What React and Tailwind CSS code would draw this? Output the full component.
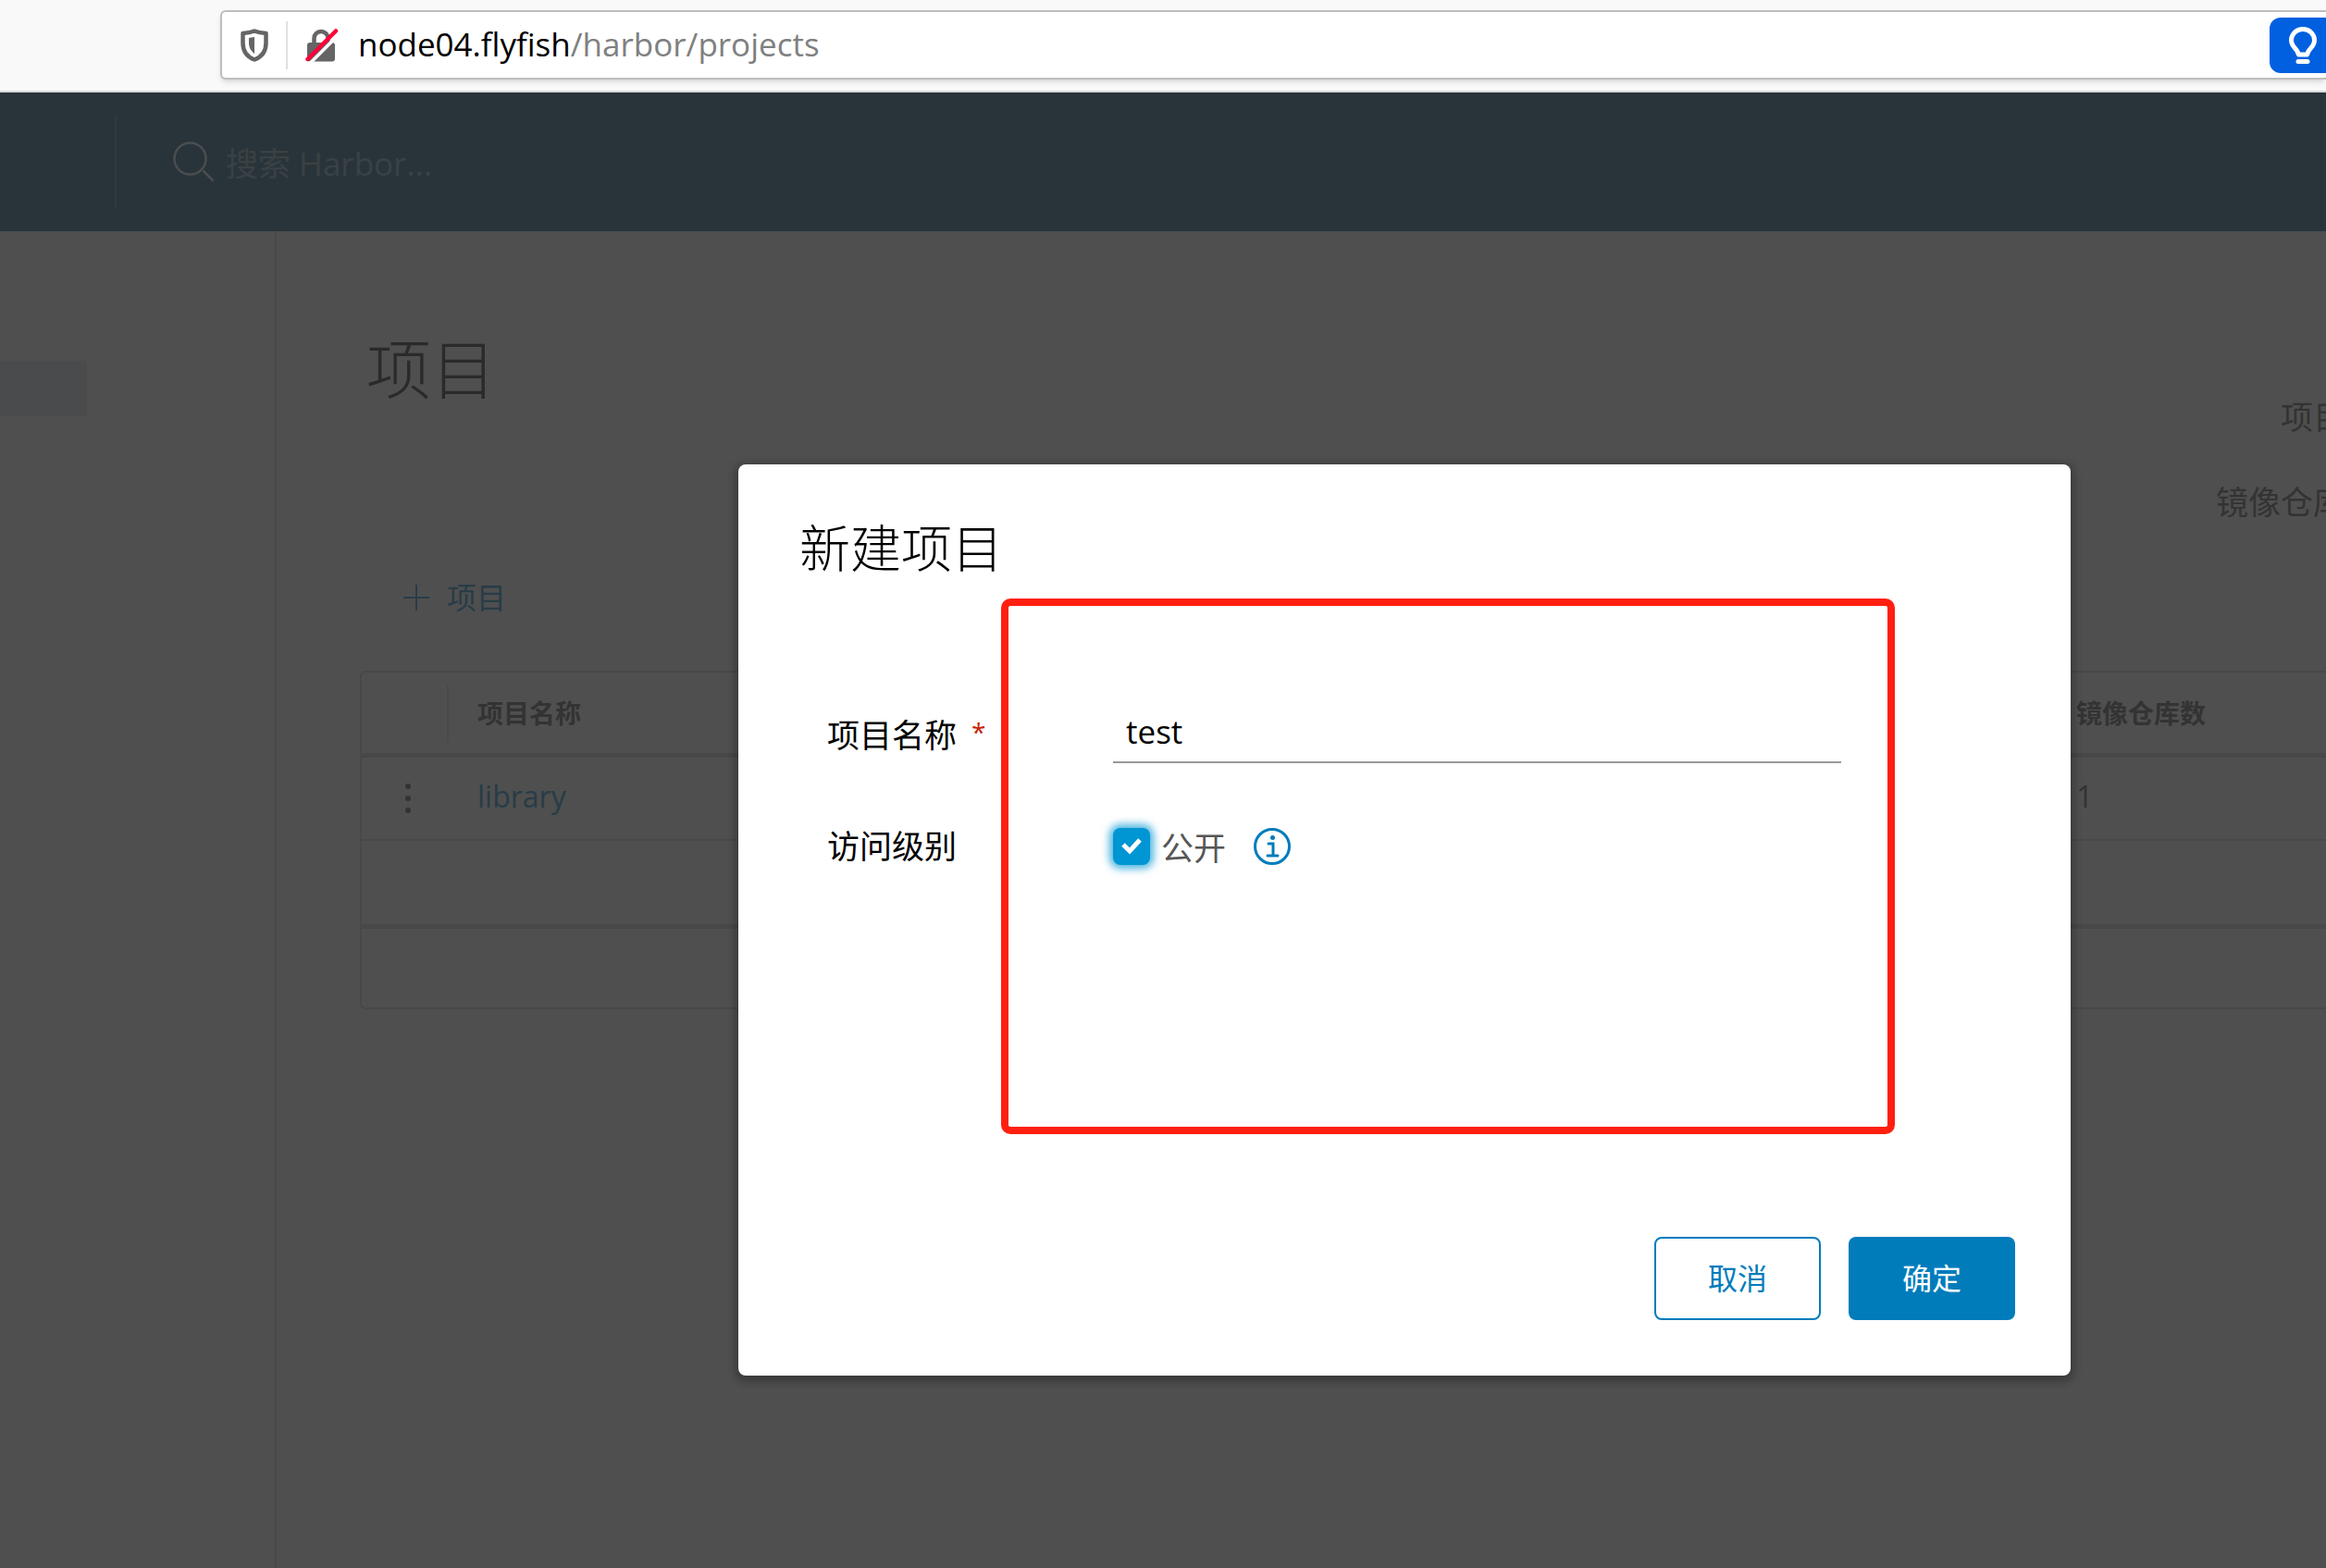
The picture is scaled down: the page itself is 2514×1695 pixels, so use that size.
const HEAD = "font-bold text-[28px] leading-9";

function Shield() {
  return (
    <svg viewBox="0 0 30 36" className="h-9 w-[30px] shrink-0" fill="none">
      <path
        d="M15 2.5c-3.500 1.500-7.500 2.300-12.500 2.500v10.500c0 8.500 4.500 15 12.500 18 8-3 12.500-9.500 12.500-18V5C22.500 4.800 18.500 4 15 2.500z"
        stroke="#656565"
        strokeWidth="4.500"
        strokeLinejoin="round"
      />
      <path d="M15 9v18c-3.500-2.500-6-6.500-6-11.500V10z" fill="#656565" />
    </svg>
  );
}

function InsecureLock() {
  return (
    <svg viewBox="0 0 36 36" className="h-9 w-9 shrink-0" fill="none">
      <path d="M9.500 17v-6.500a7.500 7.500 0 0 1 15 0V17" stroke="#656565" strokeWidth="4.500" />
      <rect x="2" y="15" width="30" height="20.500" rx="3" fill="#656565" />
      <path d="M4.500 38 36.500 6" stroke="#fff" strokeWidth="3.500" />
      <path d="M2.500 33 33 2.500" stroke="#ff0039" strokeWidth="4.500" strokeLinecap="round" />
    </svg>
  );
}

function Bulb() {
  return (
    <svg viewBox="0 0 30 40" className="h-10 w-[30px]" fill="none">
      <path
        d="M10.500 30 9 26.500C7 23 2.500 20.500 2.500 14.500a12.500 12 0 0 1 25 0C27.500 20.500 23 23 21 26.500L19.500 30z"
        stroke="#fff"
        strokeWidth="5"
        strokeLinejoin="round"
      />
      <rect x="7.500" y="35" width="15" height="5" rx="2.500" fill="#fff" />
    </svg>
  );
}

function BrowserBar() {
  return (
    <div className="flex h-[100px] border-b-2 border-[#d8d8d8] bg-[#f9f9fa] pt-[11px] pl-[238px]">
      <div className="flex h-[75px] grow items-center rounded-l-md border-2 border-r-0 border-[#bebebe] bg-white pl-5 shadow-md">
        <Shield />
        <div className="mx-[19px] h-[52px] w-[2px] bg-[#e0e0e0]" />
        <InsecureLock />
        <span className="ml-[21px] grow pb-0.5 text-[35px] leading-[48px] text-[#808080]">
          <span className="text-black">node04.flyfish</span>/harbor/projects
        </span>
        <button aria-label="tips" className="flex h-[60px] w-[61px] items-center rounded-l-xl bg-[#0060df] pl-[21px]">
          <Bulb />
        </button>
      </div>
    </div>
  );
}

function Header() {
  return (
    <header className="flex h-[150px] items-center bg-[#29343a]">
      <div className="ml-[124px] h-[100px] w-[2px] bg-[#2f393e]" />
      <label className="ml-[60px] flex items-center gap-3">
        <svg viewBox="0 0 46 46" className="size-[46px]" fill="none" stroke="#4a4d4f" strokeWidth="2.500" strokeLinecap="round">
          <circle cx="19.500" cy="19.500" r="17" />
          <path d="m34 33 10 10" />
        </svg>
        <input
          type="search"
          aria-label="搜索"
          placeholder="搜索 Harbor..."
          className="w-[480px] bg-transparent pt-1 text-[35px] leading-[48px] outline-none placeholder:text-[#3a4144]"
        />
      </label>
    </header>
  );
}

function ProjectTable() {
  return (
    <div className="mt-[55px] -mr-2 rounded-md border-2 border-[#484848]">
      <table className="w-full table-fixed border-separate border-spacing-0 text-left">
        <thead>
          <tr className="h-[92px] *:border-b-[5px] *:border-[#484848]">
            <th className="w-[94px] p-0" aria-label="actions">
              <div className="h-[62px] border-r-2 border-[#4a4a4a]" />
            </th>
            <th className={`w-[1728px] py-0 pr-0 pl-[31px] ${HEAD}`}>项目名称</th>
            <th className={`py-0 pr-0 pl-[31px] ${HEAD}`}>镜像仓库数</th>
          </tr>
        </thead>
        <tbody>
          <tr className="h-[90px] text-[32px] leading-[48px] *:border-b-2 *:border-[#484848]">
            <td className="py-0 pr-0 pl-[47px]">
              <button aria-label="row menu" className="flex flex-col gap-[7px]">
                <span className="size-[6px] rounded-full bg-[#333]" />
                <span className="size-[6px] rounded-full bg-[#333]" />
                <span className="size-[6px] rounded-full bg-[#333]" />
              </button>
            </td>
            <td className="pt-0 pr-0 pb-1 pl-[31px]">
              <a href="#library" className="text-[#283c47]">library</a>
            </td>
            <td className="pt-0 pr-0 pb-1 pl-[31px]">1</td>
          </tr>
          <tr className="h-[95px] *:border-b-[5px] *:border-[#484848]">
            <td colSpan={3} />
          </tr>
          <tr className="h-[85px]">
            <td colSpan={3} />
          </tr>
        </tbody>
      </table>
    </div>
  );
}

function NewProjectDialog() {
  return (
    <div className="absolute inset-x-0 top-[502px] flex justify-center pl-[522px]">
      <form
        role="dialog"
        aria-labelledby="dialog-title"
        className="relative flex h-[985px] w-[1440px] flex-col rounded-lg bg-white px-[60px] pt-[54px] pb-[60px] text-black shadow-[0_3px_8px_4px_rgba(0,0,0,0.25)]"
      >
        <h2 id="dialog-title" className="pl-[6px] text-[55px] font-light leading-[72px]">
          新建项目
        </h2>

        <div className="mt-[137px] flex items-center pl-9 text-[35px] leading-[48px]">
          <label htmlFor="project-name" className="flex w-[309px]">
            项目名称
            <span className="ml-4 text-[28px] leading-10 text-[#c92100]">*</span>
          </label>
          <input
            id="project-name"
            defaultValue="test"
            className="h-[60px] w-[787px] border-b-2 border-[#999] px-[14px] pb-2 outline-none"
          />
        </div>

        <div className="mt-[58px] flex items-center pl-9 text-[35px] leading-[60px]">
          <span className="w-[309px]">访问级别</span>
          <label className="flex items-center gap-3 text-[#565656]">
            <span className="grid size-10 place-items-center">
              <input
                type="checkbox"
                defaultChecked
                className="col-start-1 row-start-1 size-10 appearance-none rounded-lg bg-[#0095d3] shadow-[0_0_8px_4px_rgba(0,149,211,0.7)]"
              />
              <svg viewBox="0 0 24 24" className="col-start-1 row-start-1 size-6" fill="none" stroke="#fff" strokeWidth="5">
                <path d="m3 10 7 7L21 5" />
              </svg>
            </span>
            <span className="pt-1">公开</span>
          </label>
          <svg viewBox="0 0 40 40" className="ml-[30px] size-10" fill="none" stroke="#007cbb" strokeWidth="3">
            <circle cx="20" cy="20" r="18.500" />
            <circle cx="20.500" cy="10.500" r="2.500" fill="#007cbb" stroke="none" />
            <path d="M16 17h5v13M15 30h11" strokeLinecap="round" />
          </svg>
        </div>

        <div className="mt-auto flex justify-end gap-[30px] text-[32px] leading-[48px]">
          <button type="button" className="h-[90px] w-[180px] rounded-lg border-2 border-[#007cbb] text-[#007cbb]">
            取消
          </button>
          <button type="submit" className="h-[90px] w-[180px] rounded-lg bg-[#007cbb] text-white">
            确定
          </button>
        </div>

        {/* highlight frame around the form fields */}
        <div className="pointer-events-none absolute top-[145px] left-[284px] h-[579px] w-[966px] rounded-[10px] border-8 border-[#ff1f10]" />
      </form>
    </div>
  );
}

export default function App() {
  return (
    <div className="relative flex min-h-screen flex-col overflow-hidden bg-[#4f4f4f] font-['Open_Sans','Noto_Sans_CJK_SC',sans-serif] text-[#333]">
      <BrowserBar />
      <Header />
      <div className="flex grow">
        <nav className="w-[299px] shrink-0 border-r-2 border-[#484848] pt-[140px]">
          <a href="#projects" aria-label="项目" className="block h-[60px] w-[94px] bg-[#4a4b4d]" />
        </nav>
        <main className="min-w-0 grow pl-[90px]">
          <div className="flex justify-between pt-[99px]">
            <h1 className="pl-[7px] text-[70px] font-light leading-[100px] text-[#2a2a2a]">项目</h1>
            <dl className="-mr-[21px] flex flex-col items-start gap-10 pt-[76px] text-[35px] leading-[52px]">
              <dt className="ml-[70px] whitespace-nowrap">项目</dt>
              <dt className="whitespace-nowrap">镜像仓库</dt>
            </dl>
          </div>
          <button className="mt-[53px] ml-[46px] flex items-center gap-[18px] text-[32px] leading-[48px] text-[#283c47]">
            <svg viewBox="0 0 30 30" className="size-[30px]" stroke="currentColor" strokeWidth="2">
              <path d="M15 1v28M1 15h28" />
            </svg>
            项目
          </button>
          <ProjectTable />
        </main>
      </div>
      <NewProjectDialog />
    </div>
  );
}
